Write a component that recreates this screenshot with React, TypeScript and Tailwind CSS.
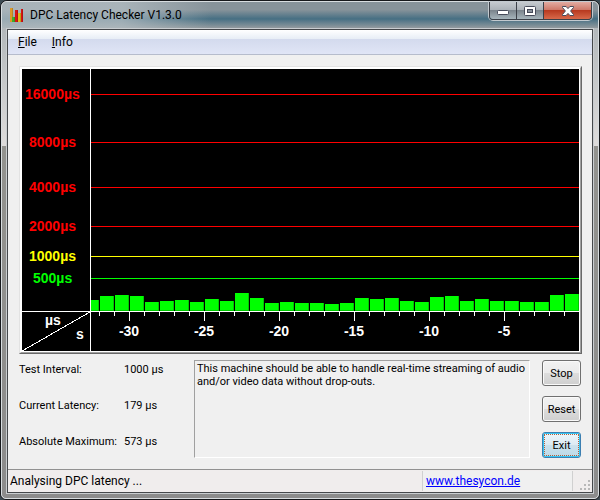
import clsx from "clsx"

const LEVELS = [
	{ label: "16000µs", y: 25, x: 3, color: "#ff0000" },
	{ label: "8000µs", y: 73, x: 7, color: "#ff0000" },
	{ label: "4000µs", y: 118, x: 7, color: "#ff0000" },
	{ label: "2000µs", y: 157, x: 7, color: "#ff0000" },
	{ label: "1000µs", y: 187, x: 7, color: "#ffff00" },
	{ label: "500µs", y: 209, x: 11, color: "#00ff00" },
]

// one bar per second, oldest first
const BARS = [
	15, 16, 15, 9, 10, 11, 9, 12, 10, 18, 13, 8, 9, 8, 8, 7, 8, 13, 12, 13, 10, 9,
	14, 15, 10, 12, 10, 10, 9, 9, 16, 17,
]

const STATS = [
	{ label: "Test Interval:", value: "1000 µs" },
	{ label: "Current Latency:", value: "179 µs" },
	{ label: "Absolute Maximum:", value: "573 µs" },
]

const Bar = ({ x, width, height }: { x: number; width: number; height: number }) => (
	<g>
		<rect x={x} y={242 - height} width={width} height={height} fill="#00c800" />
		<rect x={x} y={242 - height} width={width - 1} height={height - 1} fill="#00ff00" />
	</g>
)

const LatencyChart = () => (
	<div className="border border-t-[#e3e3e3] border-l-[#e3e3e3] border-r-[#696969] border-b-[#696969]">
		<div className="border border-t-white border-l-white border-r-[#a0a0a0] border-b-[#a0a0a0]">
			<div className="border border-white bg-black">
				<svg
					viewBox="0 0 557 282"
					className="block w-full font-['Liberation_Sans',Arial,sans-serif] text-[14px] font-bold"
					shapeRendering="crispEdges"
				>
					{LEVELS.map((level) => (
						<g key={level.label} fill={level.color}>
							<text x={level.x} y={level.y + 5}>
								{level.label}
							</text>
							<rect x="69" y={level.y} width="488" height="1" />
						</g>
					))}
					<Bar x={69} width={8} height={11} />
					{BARS.map((height, i) => (
						<Bar key={i} x={78 + i * 15} width={14} height={height} />
					))}
					<g fill="#ffffff">
						<rect x="68" y="0" width="1" height="282" />
						<rect x="0" y="242" width="557" height="1" />
						{BARS.map((_, i) => (
							<rect
								key={i}
								x={77 + i * 15}
								y="243"
								width="1"
								height={i % 5 === 2 ? 9 : 4}
							/>
						))}
						{[-30, -25, -20, -15, -10, -5].map((second, i) => (
							<text key={second} x={107 + i * 75} y="267" textAnchor="middle">
								{second}
							</text>
						))}
						<text x="23" y="256">
							µs
						</text>
						<text x="54" y="270">
							s
						</text>
					</g>
					<line x1="0" y1="282" x2="68" y2="243" stroke="#ffffff" />
				</svg>
			</div>
		</div>
	</div>
)

const AppIcon = () => (
	<svg viewBox="0 0 16 16" className="size-4" shapeRendering="crispEdges">
		<rect x="1" y="1" width="3" height="14" fill="#dc9a28" />
		<rect x="3" y="10" width="3" height="5" fill="#3fae28" />
		<rect x="6" y="3" width="3" height="12" fill="#d81414" />
		<rect x="9" y="6" width="3" height="9" fill="#dcbc1c" />
		<rect x="12" y="2" width="2" height="13" fill="#d81414" />
		<path d="M3 1h1v9H3zM5 10h1v5H5zM8 3h1v12H8zM11 6h1v9h-1zM13 2h1v13h-1z" fill="#000000" opacity="0.15" />
	</svg>
)

const WindowButtons = () => (
	<div className="flex h-[18px] self-start overflow-hidden rounded-b-[4px] border border-t-0 border-[#3b4048] shadow-[0_0_0_1px_#c3cacf]">
		<button
			type="button"
			aria-label="Minimize"
			className="flex w-[27px] items-center justify-center border-r border-[#3b4048] bg-[linear-gradient(#c5cacf,#a9b0b6_50%,#7b858d_50%,#a6b4bb)] pt-1"
		>
			<svg viewBox="0 0 12 5" className="h-[5px] w-3">
				<rect x="0.5" y="0.5" width="11" height="4" rx="1" fill="#ffffff" stroke="#464b5a" />
			</svg>
		</button>
		<button
			type="button"
			aria-label="Maximize"
			className="flex w-[27px] items-center justify-center border-r border-[#3b4048] bg-[linear-gradient(#c5cacf,#a9b0b6_50%,#7b858d_50%,#a6b4bb)]"
		>
			<svg viewBox="0 0 12 10" className="h-[10px] w-3">
				<rect x="0.5" y="0.5" width="11" height="9" rx="1" fill="#ffffff" stroke="#464b5a" />
				<rect x="3.5" y="3.5" width="5" height="3" fill="#8a929c" stroke="#464b5a" />
			</svg>
		</button>
		<button
			type="button"
			aria-label="Close"
			className="flex w-[47px] items-center justify-center bg-[linear-gradient(#e2aca2,#cc7464_50%,#b83a20_50%,#d8694a)]"
		>
			<svg viewBox="0 0 12 10" className="h-[10px] w-3">
				<path
					d="M.5 .5h3.6L6 2.6 7.9.5h3.6v1L8.6 5l2.9 3.5v1H7.9L6 7.4 4.1 9.5H.5v-1L3.4 5 .5 1.5z"
					fill="#ffffff"
					stroke="#464b5a"
				/>
			</svg>
		</button>
	</div>
)

const PushButton = ({ label, focused }: { label: string; focused?: boolean }) => (
	<button
		type="button"
		className={clsx(
			"h-[26px] w-[39px] rounded-[3px] border text-[11px]",
			focused
				? "border-[#3c7fb1] bg-[linear-gradient(#eef6fa,#dceaf2_50%,#cce2ed_50%,#bcdae8)] shadow-[inset_0_0_0_1px_#36c6f4] outline-1 -outline-offset-3 outline-dotted outline-[#b0603c]"
				: "border-[#707070] bg-[linear-gradient(#f2f2f2,#ebebeb_50%,#dddddd_50%,#cfcfcf)] shadow-[inset_0_0_0_1px_#fafafa]",
		)}
	>
		{label}
	</button>
)

export default function App() {
	return (
		<div className="bg-[#3c4a52] font-['Roboto','Open_Sans',sans-serif] text-black">
			<div className="rounded-t-[7px] rounded-b-[6px] border border-[#16181b] bg-[#98999b]">
				<div className="rounded-t-[6px] rounded-b-[5px] border border-[#d8dde0] bg-[linear-gradient(#a9b0b4,#dedcdb_29%,#93938f_29%,#8c8c8c)] px-[4px] pb-[4px]">
					<header className="-mx-[4px] flex h-[26px] rounded-t-[5px] bg-[linear-gradient(90deg,#b4bec3c0,#b4bec3c0_120px,transparent_210px),linear-gradient(#87939a_30%,#466f83_65%,#929a9e)] pl-[7px] pr-[6px]">
						<div className="flex grow items-center gap-[5px]">
							<AppIcon />
							<h1 className="text-xs">DPC Latency Checker V1.3.0</h1>
						</div>
						<WindowButtons />
					</header>
					<main className="border border-[#c9cdd0]">
						<div className="border border-[#45484b] bg-[#f0f0f0]">
							<nav className="flex h-[25px] items-center gap-[15px] border-b border-[#b6bccc] bg-[linear-gradient(#ffffff,#e8eef6_36%,#d3daed_36%,#e0e5f6)] px-[10px] text-xs">
								<button type="button">
									<u>F</u>ile
								</button>
								<button type="button">
									<u>I</u>nfo
								</button>
							</nav>
							<div className="pt-[11px] pr-[10px] pl-[11px]">
								<LatencyChart />
							</div>
							<div className="flex pt-[6px] pr-[11px] pb-[11px] pl-[11px] text-[11px] leading-[13px]">
								<dl className="grid w-[175px] shrink-0 grid-cols-[105px_1fr] content-start gap-y-[23px] pt-[3px]">
									{STATS.map((stat) => (
										<div key={stat.label} className="contents">
											<dt>{stat.label}</dt>
											<dd>{stat.value}</dd>
										</div>
									))}
								</dl>
								<textarea
									readOnly
									aria-label="Result"
									className="h-[98px] min-w-0 grow resize-none border border-t-[#a0a0a0] border-r-white border-b-white border-l-[#a0a0a0] px-[2px] py-[1px]"
									defaultValue="This machine should be able to handle real-time streaming of audio and/or video data without drop-outs."
								/>
								<div className="flex flex-col justify-between pl-3">
									<PushButton label="Stop" />
									<PushButton label="Reset" />
									<PushButton label="Exit" focused />
								</div>
							</div>
							<footer className="flex h-[23px] items-center border-t border-[#919191] bg-[#f0eded] text-xs">
								<p className="grow pl-[2px]">Analysing DPC latency ...</p>
								<a
									href="http://www.thesycon.de"
									className="w-[151px] border-x border-[#d0d0d0] bg-[#f0f0f0] pl-[3px] leading-5 text-[#0000ff] underline"
								>
									www.thesycon.de
								</a>
								<svg viewBox="0 0 19 20" className="h-5 w-[19px]" fill="#b8b8b8">
									<path d="M15 9h2v2h-2zM11 13h2v2h-2zM15 13h2v2h-2zM7 17h2v2H7zM11 17h2v2h-2zM15 17h2v2h-2z" />
								</svg>
							</footer>
						</div>
					</main>
				</div>
			</div>
		</div>
	)
}
